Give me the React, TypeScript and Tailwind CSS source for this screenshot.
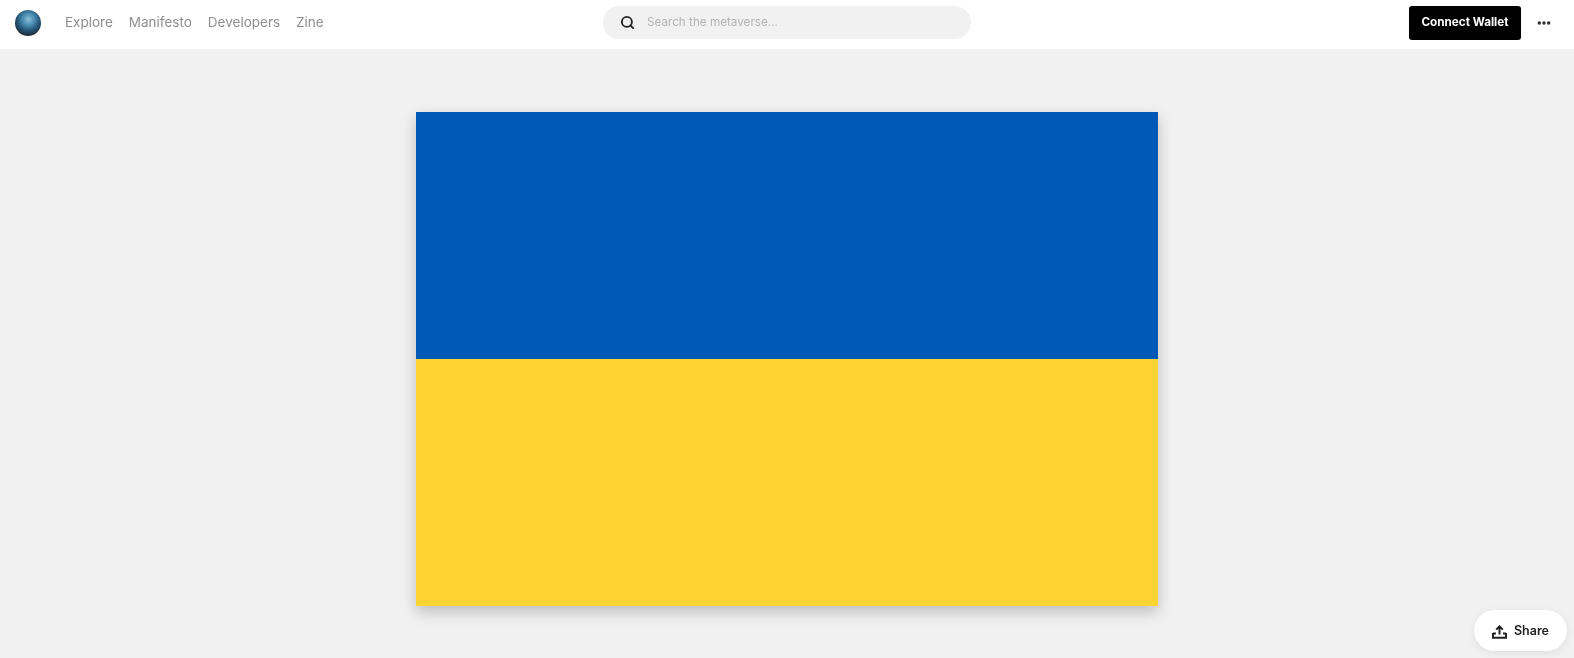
import { Search, MoreHorizontal } from "lucide-react";

export default function App() {
  return (
    <div className="relative h-[658px] w-full overflow-hidden bg-[#f1f1f1] font-['Inter','Liberation_Sans',sans-serif]">
      <header className="grid h-[49px] grid-cols-[1fr_368px_1fr] items-center bg-white px-[15px] pb-[4px]">
        <div className="flex items-center">
          <div className="h-[26px] w-[26px] rounded-full bg-[radial-gradient(circle_at_52%_36%,#8cc0d8_0%,#4a8cb2_28%,#22506f_55%,#22222c_82%)]" />
          <nav className="ml-[24px] flex items-center gap-[16px] text-[13.5px] text-[#8f8f8f] blur-[0.5px]">
            <span>Explore</span>
            <span>Manifesto</span>
            <span>Developers</span>
            <span>Zine</span>
          </nav>
        </div>
        <div className="flex h-[33px] items-center rounded-full bg-[#f1f1f1] pl-[17px]">
          <Search className="h-[15px] w-[15px] text-[#222222]" strokeWidth={3} />
          <span className="ml-[12px] text-[11.7px] text-[#b4b4b4] blur-[0.5px]">Search the metaverse...</span>
        </div>
        <div className="flex items-center justify-end pr-[7px]">
          <button className="flex h-[34px] w-[112px] items-center justify-center rounded-[3px] bg-black text-[11.7px] font-bold text-white">
            <span className="blur-[0.4px]">Connect Wallet</span>
          </button>
          <MoreHorizontal className="ml-[15px] h-[16px] w-[16px] text-[#222222]" strokeWidth={3} />
        </div>
      </header>
      <main className="flex justify-center pt-[63px]">
        <div className="w-[742px] shadow-[0_6px_14px_rgba(0,0,0,0.22)]">
          <div className="h-[247px] bg-[#0159b7]" />
          <div className="h-[247px] bg-[#ffd332]" />
        </div>
      </main>
      <button className="absolute bottom-[7px] right-[7px] flex h-[41px] w-[93px] items-center justify-center gap-[7px] rounded-full bg-white pt-[2px] text-[12.5px] font-semibold text-[#222222] shadow-[0_2px_8px_rgba(0,0,0,0.08)]">
        <svg width="15" height="14" viewBox="0 0 15 14" fill="none" stroke="#222222" strokeWidth="2">
          <path d="M7.5 9.5V1.5M4.2 4.6 7.5 1.3l3.3 3.3" />
          <path d="M1 8.5h3M11 8.5h3M1 8v4.8h13V8" />
        </svg>
        <span className="blur-[0.4px]">Share</span>
      </button>
    </div>
  );
}
